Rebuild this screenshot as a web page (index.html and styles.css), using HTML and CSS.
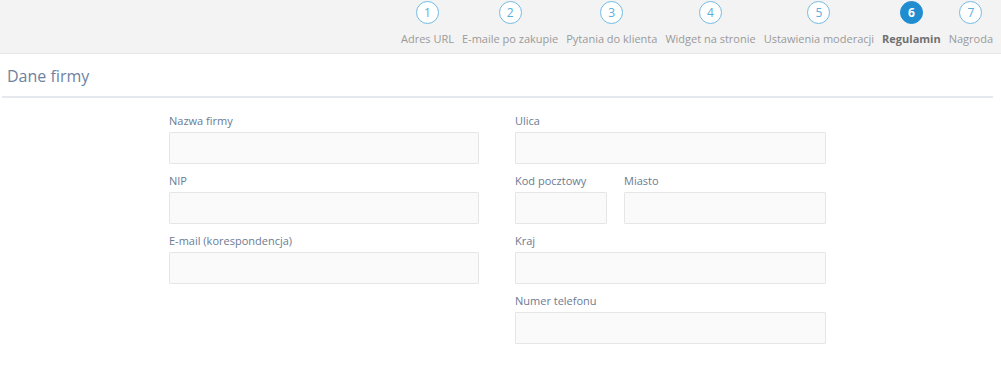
FILE: index.html
```html
<!DOCTYPE html>
<html>

<head>
  <title>Dane firmy</title>
  <link rel="stylesheet" href="styles.css">
</head>

<body>

  <div class="kroki">
    <div class="krok"><span class="kolo">1</span><span class="nazwa">Adres URL</span></div>
    <div class="krok"><span class="kolo">2</span><span class="nazwa">E-maile po zakupie</span></div>
    <div class="krok"><span class="kolo">3</span><span class="nazwa">Pytania do klienta</span></div>
    <div class="krok"><span class="kolo">4</span><span class="nazwa">Widget na stronie</span></div>
    <div class="krok"><span class="kolo">5</span><span class="nazwa">Ustawienia moderacji</span></div>
    <div class="krok aktywny"><span class="kolo">6</span><span class="nazwa">Regulamin</span></div>
    <div class="krok"><span class="kolo">7</span><span class="nazwa">Nagroda</span></div>
  </div>

  <h2 class="tytul">Dane firmy</h2>

  <div class="formularz">
    <div class="kolumna">
      <div class="pole">
        <label>Nazwa firmy</label>
        <input type="text">
      </div>
      <div class="pole">
        <label>NIP</label>
        <input type="text">
      </div>
      <div class="pole">
        <label>E-mail (korespondencja)</label>
        <input type="text">
      </div>
    </div>

    <div class="kolumna">
      <div class="pole">
        <label>Ulica</label>
        <input type="text">
      </div>
      <div class="wiersz">
        <div class="pole kod">
          <label>Kod pocztowy</label>
          <input type="text">
        </div>
        <div class="pole miasto">
          <label>Miasto</label>
          <input type="text">
        </div>
      </div>
      <div class="pole">
        <label>Kraj</label>
        <input type="text">
      </div>
      <div class="pole">
        <label>Numer telefonu</label>
        <input type="text">
      </div>
    </div>
  </div>

</body>

</html>
```

FILE: styles.css
```css
body {
  margin: 0;
  font-family: "Open Sans", "Liberation Sans", sans-serif;
  background: white;
}

.kroki {
  display: flex;
  justify-content: flex-end;
  gap: 8px;
  height: 53px;
  padding-right: 8px;
  background-color: #f3f3f3;
  border-bottom: 1px solid #e7e7e7;
}

.krok {
  display: flex;
  flex-direction: column;
  align-items: center;
}

.kolo {
  width: 21px;
  height: 21px;
  margin-top: 1px;
  border: 1.5px solid #72bbe3;
  border-radius: 50%;
  display: flex;
  justify-content: center;
  align-items: center;
  font-size: 12px;
  color: #5aaddd;
  background: white;
}

.nazwa {
  margin-top: 7px;
  font-size: 11px;
  line-height: 16px;
  color: #9a9a9a;
  white-space: nowrap;
}

.aktywny .kolo {
  background-color: #1f8dcf;
  border-color: #1f8dcf;
  color: white;
  font-weight: bold;
}

.aktywny .nazwa {
  color: #707070;
  font-weight: bold;
}

.tytul {
  margin: 0 8px 0 2px;
  padding: 10px 5px 7px;
  font-size: 16px;
  line-height: 25px;
  font-weight: normal;
  color: #6f82a0;
  border-bottom: 2px solid #e5e9ee;
}

.formularz {
  display: flex;
  gap: 36px;
  padding: 13px 0 0 169px;
}

.kolumna {
  display: flex;
  flex-direction: column;
}

.kolumna:first-child {
  width: 310px;
}

.kolumna:last-child {
  width: 311px;
}

.pole {
  display: flex;
  flex-direction: column;
  margin-bottom: 7px;
}

.pole label {
  font-size: 11px;
  line-height: 20px;
  margin-bottom: 1px;
  color: #6b7b93;
}

.pole input {
  box-sizing: border-box;
  width: 100%;
  height: 32px;
  margin: 0;
  border: 1px solid #e6e6e6;
  border-radius: 1px;
  background-color: #fafafa;
}

.wiersz {
  display: flex;
  gap: 17px;
}

.kod {
  width: 92px;
}

.miasto {
  width: 202px;
}
```
